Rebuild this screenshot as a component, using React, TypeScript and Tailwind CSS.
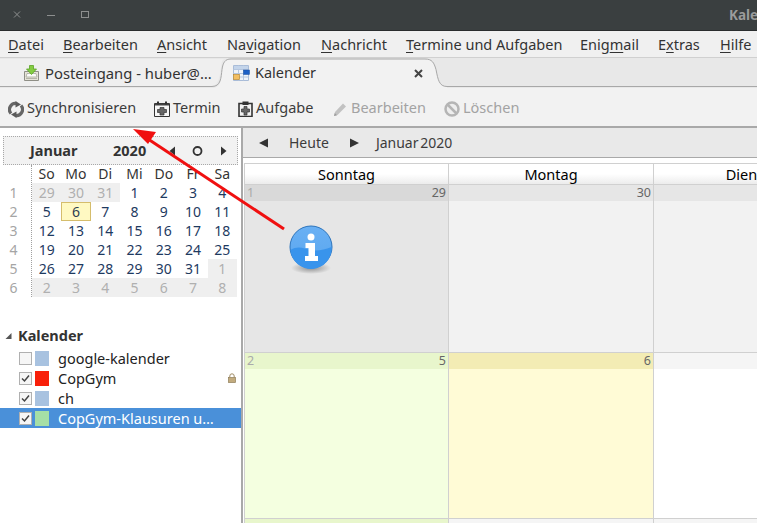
const F = "[font-family:'Noto_Sans',sans-serif]";

function Menu({ w, a, u, b }: { w: string; a: string; u: string; b: string }) {
  return (
    <span className={`${w} shrink-0 whitespace-nowrap`}>
      {a}
      <span className="underline underline-offset-2">{u}</span>
      {b}
    </span>
  );
}

function TabInboxIcon() {
  return (
    <svg width="17" height="17" viewBox="0 0 17 17" className="shrink-0">
      <path d="M1.500 6.500h14v9h-14z" fill="#e6e4d8" stroke="#8f8f86" />
      <path d="M4 8.500h9l1 3.500H3z" fill="#fbfbf8" stroke="#a8a89c" strokeWidth="0.800" />
      <path d="M3 13.500h11" stroke="#b4b4a8" />
      <path d="M6.500 0.500h4v3.500h3L8.500 9.500 3.500 4h3z" fill="#84cc42" stroke="#5aa526" strokeWidth="0.800" />
    </svg>
  );
}

function TabCalendarIcon() {
  return (
    <svg width="17" height="17" viewBox="0 0 17 17" className="shrink-0">
      <path d="M.5.500h15v15H.5z" fill="#eef3fa" stroke="#a9bcd8" />
      <path d="M.5 4.500h15M.5 8.500h15M.5 12h15M5.500.5v15M10.500.5v15" stroke="#b5c6df" fill="none" />
      <path d="M1 1h14v3H1z" fill="#c3d4ea" />
      <rect x="10.500" y="5" width="6" height="4.500" fill="#1b5fc6" stroke="#174ea0" strokeWidth="0.500" />
      <rect x="0.500" y="9.500" width="6" height="5" fill="#f3bf62" stroke="#b98b34" strokeWidth="0.700" />
    </svg>
  );
}

function SyncIcon() {
  return (
    <svg width="16" height="17" viewBox="0 0 16 17" className="shrink-0">
      <path d="M3 12.500A6 6 0 0 1 8.500 2.600" fill="none" stroke="#666" strokeWidth="3.200" />
      <path d="M13 4.500A6 6 0 0 1 7.500 14.400" fill="none" stroke="#666" strokeWidth="3.200" />
      <path d="M7.500 0l5.500 3.500-5.500 3z" fill="#5a5a5a" />
      <path d="M8.500 17L3 13.500l5.500-3z" fill="#5a5a5a" />
    </svg>
  );
}

function TerminIcon() {
  return (
    <svg width="16" height="16" viewBox="0 0 16 16" className="shrink-0">
      <path d="M.5 2.500h15v13H.5z" fill="#f7f7f7" stroke="#333" />
      <path d="M1 2.500h14v2H1z" fill="#444" />
      <path d="M3 .5h2v3H3zM11 .5h2v3h-2z" fill="#333" />
      <path d="M6 6.500h4v2h2.500v3H10v2.500H6v-2.500H3.500v-3H6z" fill="#666" stroke="#333" strokeWidth="0.700" />
    </svg>
  );
}

function AufgabeIcon() {
  return (
    <svg width="15" height="16" viewBox="0 0 15 16" className="shrink-0">
      <path d="M1 2.500h13v13H1z" fill="#f2f2f2" stroke="#333" strokeWidth="1.600" />
      <path d="M4.500 .5h6v3.500h-6z" fill="#333" />
      <path d="M6 5.500h3V8h2.500v3H9v3H6v-3H3.500V8H6z" fill="#666" stroke="#333" strokeWidth="0.700" />
    </svg>
  );
}

function PencilIcon() {
  return (
    <svg width="15" height="15" viewBox="0 0 15 15" className="shrink-0">
      <path d="M1 14l1-4 8-8.500 3 3L4.500 13z" fill="#c2c2c2" />
      <path d="M1 14l.8-3 2.200 2.200z" fill="#9c9c9c" />
    </svg>
  );
}

function BlockIcon() {
  return (
    <svg width="16" height="16" viewBox="0 0 16 16" className="shrink-0">
      <circle cx="8" cy="8" r="6.500" fill="#eee" stroke="#b5b5b5" strokeWidth="2.500" />
      <path d="M3.500 3.500l9 9" stroke="#b5b5b5" strokeWidth="2.500" />
    </svg>
  );
}

function Tool({ icon, label, off, w }: { icon: React.ReactNode; label: string; off?: boolean; w: string }) {
  return (
    <div className={`flex items-center gap-[3px] shrink-0 ${w} ${off ? "text-[#a3a3a3]" : "text-[#3c3c3c]"}`}>
      <span className="flex relative top-px">{icon}</span>
      <span className="whitespace-nowrap">{label}</span>
    </div>
  );
}

const weekdays = ["So", "Mo", "Di", "Mi", "Do", "Fr", "Sa"];
const weeks: [number, number[]][] = [
  [1, [29, 30, 31, 1, 2, 3, 4]],
  [2, [5, 6, 7, 8, 9, 10, 11]],
  [3, [12, 13, 14, 15, 16, 17, 18]],
  [4, [19, 20, 21, 22, 23, 24, 25]],
  [5, [26, 27, 28, 29, 30, 31, 1]],
  [6, [2, 3, 4, 5, 6, 7, 8]],
];

function MiniCalendar() {
  return (
    <div className="flex flex-col">
      <div className="mx-[3px] h-[29px] w-[235px] flex items-center border border-dotted border-[#a8a8a8] bg-[#f2f2f2] text-[#333] font-bold">
        <span className="ml-[26px] w-[83px]">Januar</span>
        <span className="w-[52px]">2020</span>
        <svg width="70" height="14" viewBox="0 0 70 14" className="shrink-0 ml-[2px]">
          <path d="M8 2.500v9L2.500 7z" fill="#333" />
          <circle cx="30.500" cy="7" r="4" fill="none" stroke="#333" strokeWidth="1.800" />
          <path d="M54 2.500v9L59.500 7z" fill="#333" />
        </svg>
      </div>
      <div className="flex text-[14px]">
        <div className="w-[31px] shrink-0 flex flex-col items-center text-[#a5a5a5] pt-[18px] pr-[4px]">
          {weeks.map(([n]) => (
            <div key={n} className="h-[19px] leading-[19px]">{n}</div>
          ))}
        </div>
        <div className="w-[206px] border-l border-dotted border-[#a0a0a0]">
          <div className="grid grid-cols-7 h-[18px] leading-[18px] text-center text-[#333]">
            {weekdays.map((d) => (
              <div key={d}>{d}</div>
            ))}
          </div>
          {weeks.map(([n, days], wi) => (
            <div key={n} className="grid grid-cols-7 h-[19px] text-center leading-[19px]">
              {days.map((d, i) => {
                const other = (wi === 0 && i < 3) || (wi === 4 && i === 6) || wi === 5;
                const today = wi === 1 && i === 1;
                return (
                  <div
                    key={i}
                    className={
                      today
                        ? "bg-[#fff9c2] border border-[#d5bd6c] text-[#2c3e50] leading-[17px]"
                        : other
                          ? "bg-[#efefef] text-[#b0b0b0]"
                          : "text-[#1e3a5f]"
                    }
                  >
                    {d}
                  </div>
                );
              })}
            </div>
          ))}
        </div>
      </div>
    </div>
  );
}

const cals = [
  { name: "google-kalender", color: "bg-[#a8c2e0]", on: false },
  { name: "CopGym", color: "bg-[#f8200a]", on: true, lock: true },
  { name: "ch", color: "bg-[#a8c2e0]", on: true },
  { name: "CopGym-Klausuren u…", color: "bg-[#a6dfa6]", on: true, sel: true },
];

function CalendarList() {
  return (
    <div className="mt-[28px]">
      <div className="flex items-center h-[20px] pt-[2px] text-[#333] font-bold">
        <svg width="10" height="10" viewBox="0 0 10 10" className="ml-[4px] shrink-0">
          <path d="M7.500 2v6H1.500z" fill="#555" />
        </svg>
        <span className="ml-[4px]">Kalender</span>
      </div>
      <div className="mt-[3px]">
        {cals.map((c) => (
          <div key={c.name} className={`flex items-center h-[20px] ${c.sel ? "bg-[#4a90d9] text-white" : "text-[#222]"}`}>
            <div className="ml-[19px] w-[13px] h-[13px] border border-[#b0b0b0] bg-[#f6f6f6] shrink-0 flex items-center justify-center">
              {c.on && (
                <svg width="9" height="9" viewBox="0 0 9 9">
                  <path d="M1 4.500l2.500 2.500L8 1.500" fill="none" stroke="#444" strokeWidth="1.500" />
                </svg>
              )}
            </div>
            <div className={`ml-[3px] w-[14px] h-[15px] shrink-0 ${c.color}`} />
            <span className="ml-[9px] whitespace-nowrap relative top-px">{c.name}</span>
            {c.lock && (
              <svg width="8" height="10" viewBox="0 0 8 10" className="ml-auto mr-[5px] shrink-0">
                <path d="M1.800 4.500V3a2.200 2.200 0 0 1 4.400 0v1.500" fill="none" stroke="#a08c66" />
                <rect x="0.500" y="4.500" width="7" height="5" fill="#c2ab7e" stroke="#8f7c58" strokeWidth="0.700" />
              </svg>
            )}
          </div>
        ))}
      </div>
    </div>
  );
}

function Cell({ num, week, head, body, hideNum }: { num: number; week?: number; head: string; body: string; hideNum?: boolean }) {
  return (
    <div className={`flex flex-col h-full ${body}`}>
      <div className={`h-[16px] flex justify-between px-[2px] text-[12.500px] leading-[15px] ${head}`}>
        <span className="text-[#aaa]">{week}</span>
        {!hideNum && <span className="text-[#666]">{num}</span>}
      </div>
    </div>
  );
}

export default function App() {
  return (
    <div className={`w-[757px] h-[523px] overflow-hidden relative bg-white text-[14.500px] ${F}`}>
      {/* title bar */}
      <div className="h-[31px] bg-[#3a3f40] border-b border-[#2a2d2e] flex items-center text-[#9a9c9c]">
        <svg width="100" height="12" viewBox="0 0 100 12" className="ml-[10px] shrink-0">
          <path d="M4 2.500l6 6M10 2.500l-6 6" stroke="#8d8f8f" strokeWidth="1" />
          <path d="M37 6.500h8" stroke="#8d8f8f" />
          <rect x="71.500" y="2.500" width="7" height="6" fill="none" stroke="#8d8f8f" />
        </svg>
        <span className="ml-auto font-bold text-[13.500px] w-[28px] overflow-hidden">Kale</span>
      </div>
      {/* menu bar */}
      <div className="h-[27px] bg-[#f0f0f0] border-b border-[#d0d0d0] flex items-center pl-[8px] pt-px text-[#333]">
        <Menu w="w-[55px]" a="" u="D" b="atei" />
        <Menu w="w-[94px]" a="" u="B" b="earbeiten" />
        <Menu w="w-[70px]" a="" u="A" b="nsicht" />
        <Menu w="w-[94px]" a="Na" u="v" b="igation" />
        <Menu w="w-[85px]" a="" u="N" b="achricht" />
        <Menu w="w-[174px]" a="" u="T" b="ermine und Aufgaben" />
        <Menu w="w-[78px]" a="Enig" u="m" b="ail" />
        <Menu w="w-[62px]" a="E" u="x" b="tras" />
        <Menu w="w-[37px]" a="" u="H" b="ilfe" />
      </div>
      {/* tabs */}
      <div className="h-[30px] relative bg-[#e8e8e8] flex items-center text-[#333] text-[14.800px]">
        <svg width="757" height="30" viewBox="0 0 757 30" className="absolute left-0 top-0">
          <path d="M0 1h226C222 1 222 3 221 9c-1 8 -2 19 -10 19H0z" fill="#efefef" />
          <path d="M212 30c10 0 9-10 10-19 1-6 3-10 9-10h194c7 0 9 4 11 11 2 10 3 17 11 17v1z" fill="#f2f2f2" />
          <path d="M0 28.500h212c9 0 9-9 10-17 1-7 3-10.500 9-10.500h194c7 0 9 3.500 11 10.500 2 10 3 17 11 17h310" fill="none" stroke="#a8a8a8" />
        </svg>
        <div className="relative flex items-center w-[224px] shrink-0 pl-[23px]">
          <TabInboxIcon />
          <span className="ml-[5px] whitespace-nowrap">Posteingang - huber@…</span>
        </div>
        <div className="relative flex items-center w-[202px] shrink-0 pl-[9px]">
          <TabCalendarIcon />
          <span className="ml-[5px] text-[14.500px]">Kalender</span>
          <svg width="9" height="9" viewBox="0 0 9 9" className="ml-auto shrink-0 mr-[3px]">
            <path d="M1 1l7 7M8 1l-7 7" stroke="#444" strokeWidth="2" />
          </svg>
        </div>
      </div>
      {/* toolbar */}
      <div className="h-[40px] bg-[#f2f2f2] border-b-2 border-[#a9a9a9] flex items-center pl-[8px] pt-[2px]">
        <Tool w="w-[146px]" icon={<SyncIcon />} label="Synchronisieren" />
        <Tool w="w-[84px]" icon={<TerminIcon />} label="Termin" />
        <Tool w="w-[95px]" icon={<AufgabeIcon />} label="Aufgabe" />
        <Tool w="w-[111px]" off icon={<PencilIcon />} label="Bearbeiten" />
        <Tool w="w-[90px]" off icon={<BlockIcon />} label="Löschen" />
      </div>
      {/* body */}
      <div className="flex h-[395px]">
        <aside className="w-[241px] shrink-0 pt-[8px] bg-white">
          <MiniCalendar />
          <CalendarList />
        </aside>
        <main className="flex-1 min-w-0 border-l-2 border-[#a9a9a9]">
          <div className="h-[30px] bg-[#e9e9e9] border-b border-[#a9a9a9] flex items-center text-[#3c3c3c] text-[14px]">
            <svg width="9" height="10" viewBox="0 0 9 10" className="ml-[16px] shrink-0">
              <path d="M9 .5v9L0 5z" fill="#333" />
            </svg>
            <span className="ml-[21px]">Heute</span>
            <svg width="9" height="10" viewBox="0 0 9 10" className="ml-[21px] shrink-0">
              <path d="M0 .5v9L9 5z" fill="#333" />
            </svg>
            <span className="ml-[17px] [word-spacing:-2px]">Januar 2020</span>
          </div>
          <div className="pt-[5px] pl-[1px]">
            <div className="grid grid-cols-[204px_205px_205px] border-t border-[#d0d0d0] h-[22px] border-l">
              {["Sonntag", "Montag", "Dienstag"].map((d) => (
                <div key={d} className="border-r border-b border-[#d0d0d0] bg-linear-to-b from-white from-50% to-[#ececec] text-center text-black leading-[20px] overflow-hidden">
                  {d}
                </div>
              ))}
            </div>
            <div className="grid grid-cols-[204px_205px_205px] grid-rows-[168px_166px_12px] border-l border-[#d0d0d0] [&>*]:border-r [&>*]:border-b [&>*]:border-[#d0d0d0]">
              <Cell week={1} num={29} head="bg-[#d9d9d9]" body="bg-[#e6e6e6]" />
              <Cell num={30} head="bg-[#e6e6e6]" body="bg-[#f2f2f2]" />
              <Cell num={31} hideNum head="bg-[#e6e6e6]" body="bg-[#f2f2f2]" />
              <Cell week={2} num={5} head="bg-[#e8f6cc]" body="bg-[#f4ffe0]" />
              <Cell num={6} head="bg-[#f3ecb4]" body="bg-[#fffbd6]" />
              <Cell num={7} hideNum head="bg-[#f5f5f5]" body="bg-white" />
              <div className="bg-[#e8f6cc]" />
              <div className="bg-[#f5f5f5]" />
              <div className="bg-[#f5f5f5]" />
            </div>
          </div>
        </main>
      </div>
      {/* overlay arrow */}
      <svg width="757" height="523" viewBox="0 0 757 523" className="absolute left-0 top-0 pointer-events-none">
        <path d="M284 229L145 137" stroke="#f01010" strokeWidth="3" fill="none" />
        <path d="M133 129l23 3-8 12z" fill="#f01010" />
      </svg>
      {/* overlay info */}
      <svg width="50" height="52" viewBox="0 0 50 52" className="absolute left-[286px] top-[224px] pointer-events-none">
        <defs>
          <radialGradient id="shadow"><stop offset="0" stopColor="#555" stopOpacity="0.6" /><stop offset="1" stopColor="#555" stopOpacity="0" /></radialGradient>
          <linearGradient id="ball" x1="0" y1="0" x2="0" y2="1"><stop offset="0" stopColor="#69b0f4" /><stop offset="1" stopColor="#5aa6ee" /></linearGradient>
        </defs>
        <ellipse cx="25" cy="44" rx="20" ry="6" fill="url(#shadow)" />
        <circle cx="25" cy="23" r="21" fill="url(#ball)" stroke="#2c74bc" />
        <path d="M4.500 26c8 -5 14 -1 20.500 0s13 0 20.500-3A20.500 20.500 0 0 1 4.500 26z" fill="#3994ec" />
        <circle cx="25" cy="13" r="3.500" fill="#fff" />
        <path d="M19.500 19h9.500v13h3v5H19v-5h3.500v-8h-3z" fill="#fff" />
      </svg>
    </div>
  );
}
